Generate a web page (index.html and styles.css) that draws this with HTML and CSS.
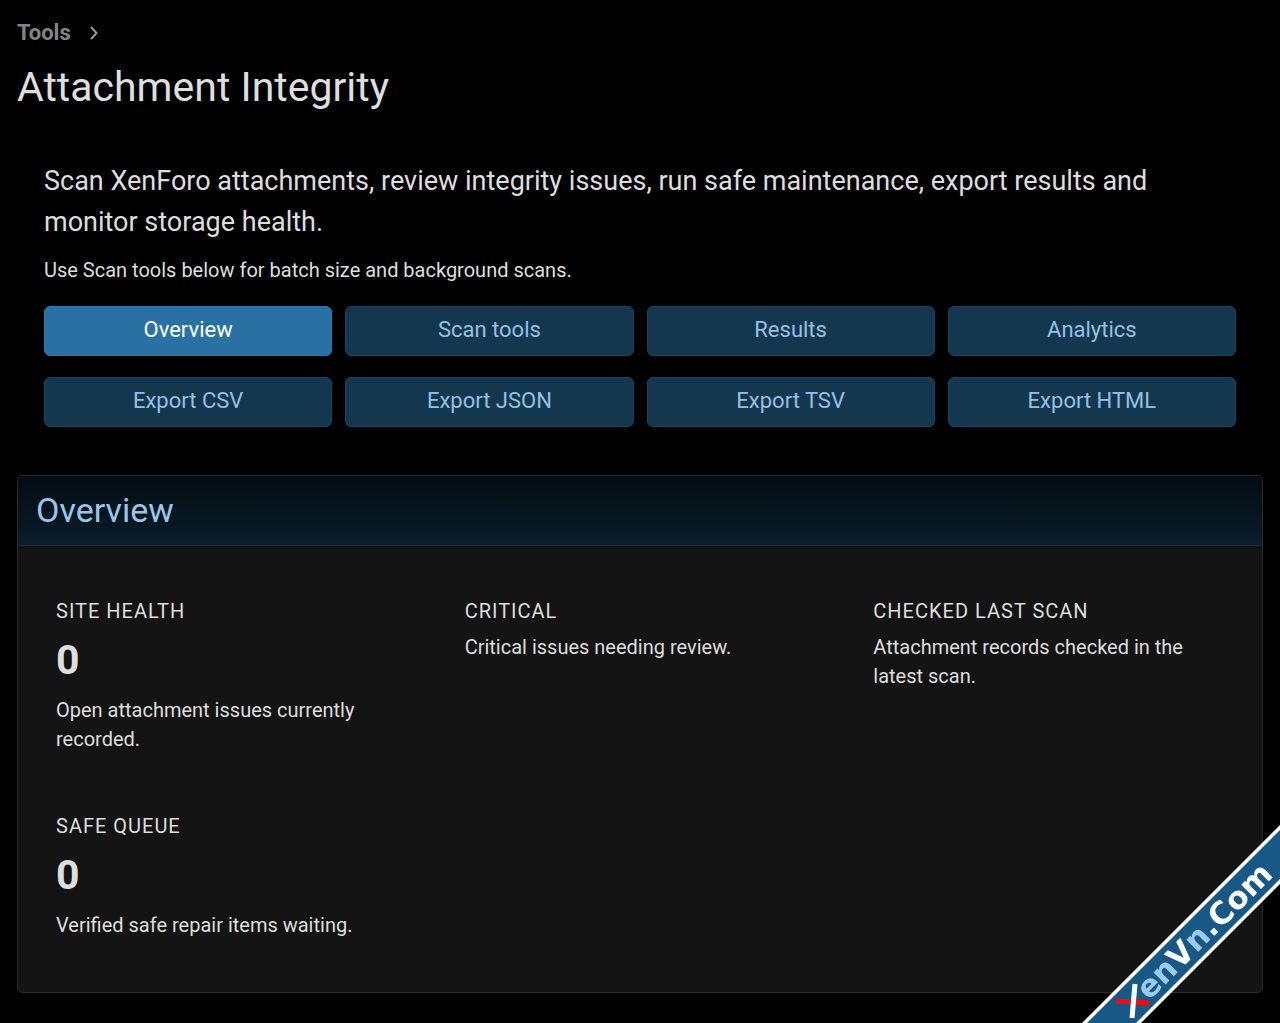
FILE: index.html
```html
<!DOCTYPE html>
<html lang="en">
<head>
<meta charset="utf-8">
<meta name="viewport" content="width=device-width, initial-scale=1">
<title>Attachment Integrity</title>
<link rel="stylesheet" href="styles.css">
</head>
<body>
<main class="page">
  <nav class="breadcrumb" aria-label="Breadcrumb">
    <a href="#">Tools</a>
    <svg class="chevron" width="10" height="14" viewBox="0 0 10 14" aria-hidden="true"><path d="M2 1 L7.500 7 L2 13"/></svg>
  </nav>
  <h1 class="title">Attachment Integrity</h1>

  <section class="intro">
    <p class="lead">Scan XenForo attachments, review integrity issues, run safe maintenance, export results and monitor storage health.</p>
    <p class="hint">Use Scan tools below for batch size and background scans.</p>
    <div class="actions">
      <a class="button button-active" href="#overview">Overview</a>
      <a class="button" href="#">Scan tools</a>
      <a class="button" href="#">Results</a>
      <a class="button" href="#">Analytics</a>
      <a class="button" href="#">Export CSV</a>
      <a class="button" href="#">Export JSON</a>
      <a class="button" href="#">Export TSV</a>
      <a class="button" href="#">Export HTML</a>
    </div>
  </section>

  <section class="panel" id="overview">
    <h2 class="panel-title">Overview</h2>
    <div class="stats">
      <article class="stat">
        <h3 class="stat-label">Site health</h3>
        <p class="stat-value">0</p>
        <p class="stat-text">Open attachment issues currently recorded.</p>
      </article>
      <article class="stat">
        <h3 class="stat-label">Critical</h3>
        <p class="stat-text">Critical issues needing review.</p>
      </article>
      <article class="stat">
        <h3 class="stat-label">Checked last scan</h3>
        <p class="stat-text">Attachment records checked in the latest scan.</p>
      </article>
      <article class="stat">
        <h3 class="stat-label">Safe queue</h3>
        <p class="stat-value">0</p>
        <p class="stat-text">Verified safe repair items waiting.</p>
      </article>
    </div>
  </section>
</main>

<svg class="ribbon" width="200" height="200" viewBox="0 0 200 200" role="img" aria-label="XenVn.Com">
  <polygon fill="#fff" points="2,200 202,0 202,59 61,200"/>
  <polygon fill="#175887" points="7,200 207,0 207,49 56,200"/>
  <line x1="36" y1="178" x2="69" y2="180" stroke="#f40b12" stroke-width="5"/>
  <line x1="55" y1="161" x2="52" y2="195" stroke="#fff" stroke-width="5"/>
  <text class="ribbon-text" transform="translate(69 178) rotate(-45)"><tspan class="pale">en</tspan>V<tspan class="pale">n</tspan>.Com</text>
</svg>
</body>
</html>
```

FILE: styles.css
```css
* { box-sizing: border-box; }

body {
  margin: 0;
  background: #000;
  color: #dedede;
  font-family: Roboto, "Liberation Sans", sans-serif;
  font-size: 20px;
  line-height: 28px;
}

h1, h2, h3, p { margin: 0; font-weight: 400; }
a { text-decoration: none; }

.page { padding: 18px 17px 30px; }

.breadcrumb {
  display: flex;
  align-items: center;
  gap: 18px;
  font-size: 22px;
  line-height: 30px;
  font-weight: 700;
}
.breadcrumb a { color: #848484; }
.chevron { fill: none; stroke: #999; stroke-width: 2; }

.title {
  padding-top: 10px;
  font-size: 41px;
  line-height: 58px;
}

.intro { padding: 45px 27px 48px; }
.lead { font-size: 27px; line-height: 41px; }
.hint { margin-top: 13px; }

.actions {
  display: grid;
  grid-template-columns: repeat(4, 1fr);
  gap: 21px 13px;
  margin-top: 22px;
}
.button {
  padding: 8px 12px 10px;
  border: 1px solid #1b425f;
  border-radius: 6px;
  background: #143750;
  color: #94c0e2;
  font-size: 22px;
  line-height: 30px;
  text-align: center;
}
.button-active {
  border-color: #2c78aa;
  background: #2971a3;
  color: #fff;
}

.panel {
  overflow: hidden;
  border: 1px solid #2c2c2c;
  border-radius: 6px;
  background: #141414;
}
.panel-title {
  padding: 10px 18px 11px;
  border-bottom: 1px solid #252a2d;
  background: linear-gradient(#040c12, #0a1d2a);
  color: #9ac5e8;
  font-size: 34px;
  line-height: 48px;
}
.stats {
  display: grid;
  grid-template-columns: repeat(3, 1fr);
  gap: 18px;
  padding: 31px 18px 32px;
}
.stat { padding: 20px; }
.stat-label {
  font-size: 20px;
  line-height: 28px;
  letter-spacing: 1px;
  text-transform: uppercase;
}
.stat-value {
  margin: 9px 0 10px;
  font-size: 41px;
  line-height: 52px;
  font-weight: 700;
}
.stat-text { line-height: 29px; }
.stat-label + .stat-text { margin-top: 8px; }

.ribbon {
  position: fixed;
  right: 0;
  bottom: 0;
}
.ribbon-text {
  fill: #fff;
  font-family: "DejaVu Sans", sans-serif;
  font-size: 31px;
  font-weight: 700;
}
.pale { fill: #9ccbee; }
```
